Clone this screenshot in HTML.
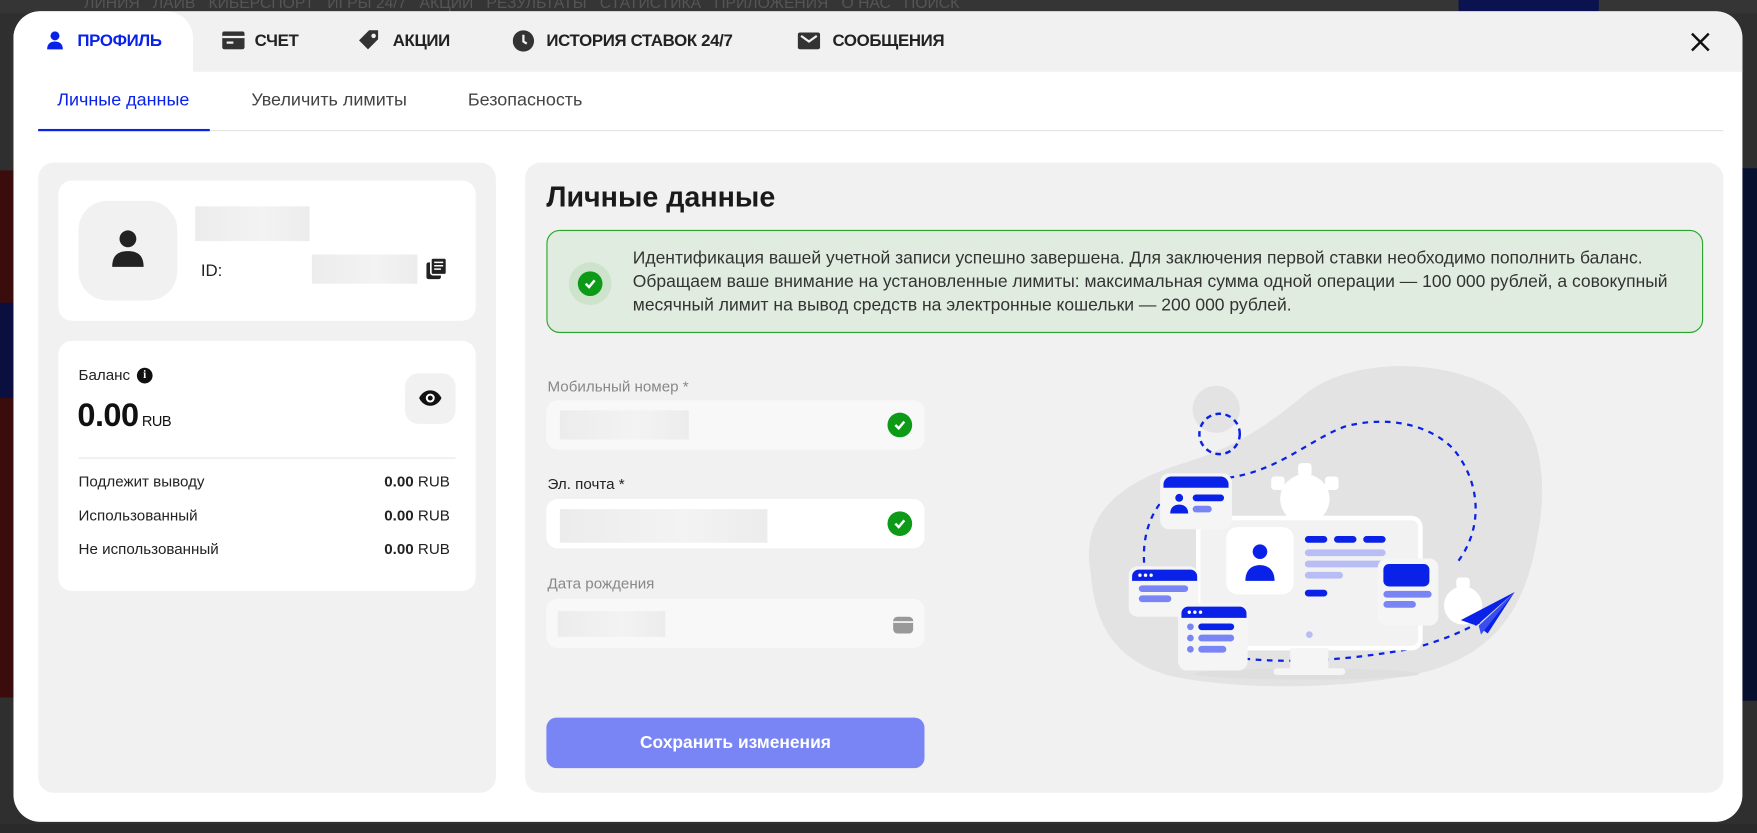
<!DOCTYPE html>
<html><head><meta charset="utf-8">
<style>
*{margin:0;padding:0;box-sizing:border-box}
html,body{width:1757px;height:832px;overflow:hidden;background:#2f2f2f;font-family:"Liberation Sans",sans-serif}
#s{position:absolute;left:0;top:0;width:1566px;height:742px;transform:scale(1.12197,1.1213);transform-origin:0 0}
.a{position:absolute}
.nav{color:#555;font-size:14px;top:-6px}
.modal{left:12px;top:10px;width:1541px;height:723px;background:#fff;border-radius:24px;overflow:hidden}
.tabbar{left:0;top:0;width:1541px;height:54px;background:#f1f1f1}
.tab{top:18px;font-size:15px;font-weight:bold;color:#222;letter-spacing:-0.3px;white-space:nowrap}
.sub{top:71px;font-size:16px;color:#444}
.panel{background:#f1f1f1;border-radius:14px}
.card{background:#fff;border-radius:12px}
.blur{background:linear-gradient(90deg,#ececec,#f3f3f3 60%,#ececec)}
.row{font-size:13.5px;color:#222}
.val{font-size:13.5px;color:#222;right:0}
.lbl{font-size:13.5px;color:#888}
.inp{width:337px;height:44px;border-radius:10px}
.chk{width:22px;height:22px;border-radius:50%;background:#0c9a17}
</style></head><body>
<div id="s">
<div class="a" style="left:0;top:0;width:1566px;height:12px;background:#353535"></div>
<div class="a nav" style="left:75px">ЛИНИЯ &nbsp; ЛАЙВ &nbsp; КИБЕРСПОРТ &nbsp; ИГРЫ 24/7 &nbsp; АКЦИИ &nbsp; РЕЗУЛЬТАТЫ &nbsp; СТАТИСТИКА &nbsp; ПРИЛОЖЕНИЯ &nbsp; О НАС &nbsp; ПОИСК</div>
<div class="a" style="left:1300px;top:0;width:125px;height:10px;background:#0a1250"></div>
<div class="a" style="left:0;top:152px;width:12px;height:470px;background:#3a0c0c"></div>
<div class="a" style="left:0;top:270px;width:12px;height:85px;background:#0a0f40"></div>
<div class="a" style="left:1553px;top:150px;width:13px;height:475px;background:#081030"></div>
<div class="a" style="left:0;top:735px;width:1566px;height:8px;background:#2a2a2a"></div>

<div class="a modal">
 <div class="a tabbar"></div>
 <div class="a" style="left:0;top:0;width:160px;height:54px;background:#fff;border-top-right-radius:24px"></div>
 <svg class="a" style="left:28px;top:17px" width="18" height="18" viewBox="0 0 18 18"><circle cx="9" cy="5" r="4" fill="#0a22e8"/><path d="M2 17c0-5 3-7 7-7s7 2 7 7z" fill="#0a22e8"/></svg>
 <div class="a tab" style="left:57px;color:#0a22e8">ПРОФИЛЬ</div>
 <svg class="a" style="left:186px;top:18px" width="20" height="16" viewBox="0 0 20 16"><rect x="0" y="0" width="20" height="16" rx="2" fill="#333"/><rect x="0" y="4" width="20" height="2" fill="#f1f1f1"/><rect x="4" y="9" width="6" height="2" fill="#f1f1f1"/></svg>
 <div class="a tab" style="left:215px">СЧЕТ</div>
 <svg class="a" style="left:307px;top:16px" width="20" height="20" viewBox="0 0 20 20"><path d="M10 1h8v8l-9 9-8-8z" fill="#333"/><circle cx="14" cy="6" r="2" fill="#f1f1f1"/></svg>
 <div class="a tab" style="left:338px">АКЦИИ</div>
 <svg class="a" style="left:445px;top:17px" width="19" height="19" viewBox="0 0 19 19"><circle cx="9.5" cy="9.5" r="9.5" fill="#333"/><path d="M9.5 4v6l3 2" stroke="#f1f1f1" stroke-width="2" fill="none"/></svg>
 <div class="a tab" style="left:475px">ИСТОРИЯ СТАВОК 24/7</div>
 <svg class="a" style="left:699px;top:19px" width="20" height="15" viewBox="0 0 20 15"><rect width="20" height="15" rx="2" fill="#333"/><path d="M3 3l7 5 7-5" stroke="#f1f1f1" stroke-width="2" fill="none"/></svg>
 <div class="a tab" style="left:730px">СООБЩЕНИЯ</div>
 <svg class="a" style="left:1495px;top:19px" width="17" height="17" viewBox="0 0 17 17"><path d="M1 1l15 15M16 1L1 16" stroke="#111" stroke-width="2.2"/></svg>

 <div class="a sub" style="left:39px;color:#0a22e8">Личные данные</div>
 <div class="a sub" style="left:212px">Увеличить лимиты</div>
 <div class="a sub" style="left:405px">Безопасность</div>
 <div class="a" style="left:22px;top:106px;width:1502px;height:1px;background:#e2e2e2"></div>
 <div class="a" style="left:22px;top:105px;width:153px;height:2px;background:#0a22e8"></div>

 <div class="a panel" style="left:22px;top:135px;width:408px;height:562px">
  <div class="a card" style="left:18px;top:16px;width:372px;height:125px">
   <div class="a" style="left:18px;top:18px;width:88px;height:89px;background:#f1f1f1;border-radius:26px"></div>
   <svg class="a" style="left:44px;top:43px" width="36" height="36" viewBox="0 0 36 36"><circle cx="18" cy="9" r="7.5" fill="#222"/><path d="M4 34c0-10 5-14 14-14s14 4 14 14z" fill="#222"/></svg>
   <div class="a blur" style="left:122px;top:23px;width:102px;height:31px"></div>
   <div class="a" style="left:127px;top:72px;font-size:15px;color:#222">ID:</div>
   <div class="a blur" style="left:226px;top:66px;width:94px;height:26px"></div>
   <svg class="a" style="left:328px;top:69px" width="18" height="19" viewBox="0 0 18 19"><rect x="0" y="4" width="13" height="15" rx="2" fill="#222"/><rect x="4" y="0" width="14" height="15" rx="2" fill="#222" stroke="#fff" stroke-width="1.5"/><path d="M7 4h8M7 7h8M7 10h6" stroke="#fff" stroke-width="1.3"/></svg>
  </div>
  <div class="a card" style="left:18px;top:159px;width:372px;height:223px">
   <div class="a" style="left:18px;top:23px;font-size:13.5px;color:#222">Баланс</div>
   <div class="a" style="left:70px;top:24px;width:14px;height:14px;border-radius:50%;background:#111;color:#fff;font-size:10px;font-weight:bold;text-align:center;line-height:14px;font-family:'Liberation Serif',serif">i</div>
   <div class="a" style="left:17px;top:51px;font-size:29px;font-weight:bold;color:#111;letter-spacing:-0.5px">0.00<span style="font-size:13px;font-weight:normal;margin-left:3px">RUB</span></div>
   <div class="a" style="left:309px;top:29px;width:45px;height:45px;background:#f1f1f1;border-radius:12px"></div>
   <svg class="a" style="left:321px;top:44px" width="21" height="14" viewBox="0 0 21 14"><path d="M0.5 7C3 2 7 0 10.5 0S18 2 20.5 7C18 12 14 14 10.5 14S3 12 0.5 7z" fill="#111"/><circle cx="10.5" cy="7" r="4" fill="#fff"/><circle cx="10.5" cy="7" r="2.2" fill="#111"/></svg>
   <div class="a" style="left:18px;top:104px;width:336px;height:1px;background:#e4e4e4"></div>
   <div class="a" style="left:18px;top:118px;width:331px">
    <div class="a row" style="left:0;top:0">Подлежит выводу</div><div class="a val" style="top:0"><b>0.00</b> RUB</div>
    <div class="a row" style="left:0;top:30px">Использованный</div><div class="a val" style="top:30px"><b>0.00</b> RUB</div>
    <div class="a row" style="left:0;top:60px">Не использованный</div><div class="a val" style="top:60px"><b>0.00</b> RUB</div>
   </div>
  </div>
 </div>

 <div class="a panel" style="left:456px;top:135px;width:1068px;height:562px">
  <div class="a" style="left:19px;top:17px;font-size:25.5px;font-weight:bold;color:#1a1a1a">Личные данные</div>
  <div class="a" style="left:19px;top:60px;width:1031px;height:92px;background:#e0ecdf;border:1px solid #2aa52a;border-radius:12px">
   <div class="a" style="left:19px;top:28px;width:38px;height:38px;border-radius:50%;background:#cde3cc"></div>
   <div class="a chk" style="left:27px;top:36px"></div>
   <svg class="a" style="left:32px;top:41px" width="12" height="12" viewBox="0 0 12 12"><path d="M2 6l3 3 5-6" stroke="#fff" stroke-width="2.2" fill="none"/></svg>
   <div class="a" style="left:76px;top:14px;width:950px;font-size:15.6px;line-height:21px;color:#333">Идентификация вашей учетной записи успешно завершена. Для заключения первой ставки необходимо пополнить баланс.<br>Обращаем ваше внимание на установленные лимиты: максимальная сумма одной операции — 100 000 рублей, а совокупный месячный лимит на вывод средств на электронные кошельки — 200 000 рублей.</div>
  </div>
  <div class="a lbl" style="left:20px;top:192px">Мобильный номер *</div>
  <div class="a inp" style="left:19px;top:212px;background:#f8f8f8">
   <div class="a blur" style="left:12px;top:9px;width:115px;height:26px"></div>
   <div class="a chk" style="left:304px;top:11px"></div>
   <svg class="a" style="left:309px;top:16px" width="12" height="12" viewBox="0 0 12 12"><path d="M2 6l3 3 5-6" stroke="#fff" stroke-width="2.2" fill="none"/></svg>
  </div>
  <div class="a lbl" style="left:20px;top:279px;color:#222">Эл. почта *</div>
  <div class="a inp" style="left:19px;top:300px;background:#fff">
   <div class="a blur" style="left:12px;top:9px;width:185px;height:30px"></div>
   <div class="a chk" style="left:304px;top:11px"></div>
   <svg class="a" style="left:309px;top:16px" width="12" height="12" viewBox="0 0 12 12"><path d="M2 6l3 3 5-6" stroke="#fff" stroke-width="2.2" fill="none"/></svg>
  </div>
  <div class="a lbl" style="left:20px;top:368px">Дата рождения</div>
  <div class="a inp" style="left:19px;top:389px;background:#f8f8f8">
   <div class="a blur" style="left:10px;top:11px;width:96px;height:23px"></div>
   <svg class="a" style="left:309px;top:14px" width="18" height="17" viewBox="0 0 18 17"><rect x="0" y="2" width="18" height="15" rx="4" fill="#999"/><rect x="0" y="6" width="18" height="1.5" fill="#f8f8f8"/></svg>
  </div>
  <div class="a" style="left:19px;top:495px;width:337px;height:45px;background:#7a85f5;border-radius:9px;color:#fff;font-size:15.5px;font-weight:bold;text-align:center;line-height:45px">Сохранить изменения</div>

  <svg class="a" style="left:480px;top:160px" width="460" height="320" viewBox="948 305 460 320">
   <path d="M972 510C962 455 1005 428 1055 413C1105 398 1135 375 1165 350C1205 320 1285 318 1335 348C1380 380 1378 440 1370 480C1360 540 1335 580 1275 598C1205 616 1100 616 1040 602C995 588 976 560 972 510z" fill="#e3e3e3"/>
   <circle cx="1084" cy="365" r="21" fill="#e3e3e3"/>
   <circle cx="1087" cy="387" r="18" fill="none" stroke="#0a22e8" stroke-width="2.2" stroke-dasharray="5 4"/>
   <path d="M1095 426C1140 420 1170 390 1200 380C1240 370 1275 380 1295 400C1320 430 1322 470 1300 500" fill="none" stroke="#0a22e8" stroke-width="2" stroke-dasharray="5 5"/>
   <path d="M1040 442C1022 460 1018 485 1020 505" fill="none" stroke="#0a22e8" stroke-width="2" stroke-dasharray="5 5"/>
   <path d="M1070 580C1120 595 1200 590 1260 578C1290 570 1310 560 1322 553" fill="none" stroke="#0a22e8" stroke-width="2" stroke-dasharray="5 5"/>
   <ellipse cx="1165" cy="601" rx="100" ry="5" fill="#dedede"/>
   <g fill="#fff"><circle cx="1163" cy="445" r="22"/><rect x="1157" y="413" width="12" height="12" rx="3"/><rect x="1133" y="425" width="12" height="12" rx="3"/><rect x="1181" y="425" width="12" height="12" rx="3"/></g>
   <circle cx="1304" cy="540" r="17" fill="#fff"/><rect x="1298" y="515" width="12" height="10" rx="3" fill="#fff"/>
   <rect x="1068" y="462" width="198" height="116" rx="8" fill="#f2f2f2" stroke="#fff" stroke-width="4"/>
   <rect x="1150" y="578" width="34" height="20" fill="#f5f5f5"/>
   <rect x="1135" y="596" width="64" height="6" rx="3" fill="#f5f5f5"/>
   <circle cx="1167" cy="566" r="3" fill="#b8bef5"/>
   <rect x="1093" y="470" width="60" height="60" rx="10" fill="#fff"/>
   <circle cx="1123" cy="492" r="6.5" fill="#0a22e8"/><path d="M1110 518c0-10 6-14 13-14s13 4 13 14z" fill="#0a22e8"/>
   <g fill="#0a22e8"><rect x="1163" y="478" width="20" height="6" rx="3"/><rect x="1189" y="478" width="20" height="6" rx="3"/><rect x="1215" y="478" width="20" height="6" rx="3"/><rect x="1163" y="526" width="20" height="6" rx="3"/></g>
   <g fill="#b8bef5"><rect x="1163" y="490" width="72" height="6" rx="3"/><rect x="1163" y="500" width="72" height="6" rx="3"/><rect x="1163" y="510" width="34" height="6" rx="3"/></g>
   <rect x="1034" y="422" width="64" height="50" rx="8" fill="#f5f5f5"/>
   <path d="M1037 432a7 7 0 0 1 7-7h44a7 7 0 0 1 7 7v3h-58z" fill="#0a22e8"/>
   <circle cx="1051" cy="444" r="3.5" fill="#0a22e8"/><path d="M1043 458c0-6 4-8 8-8s8 2 8 8z" fill="#0a22e8"/>
   <rect x="1063" y="441" width="28" height="6" rx="3" fill="#0a22e8"/><rect x="1063" y="451" width="17" height="6" rx="3" fill="#7a85f5"/>
   <rect x="1006" y="505" width="62" height="45" rx="8" fill="#f5f5f5"/>
   <path d="M1009 514a6 6 0 0 1 6-6h46a6 6 0 0 1 6 6v4h-58z" fill="#0a22e8"/>
   <g fill="#fff"><circle cx="1016" cy="513" r="1.5"/><circle cx="1021" cy="513" r="1.5"/><circle cx="1026" cy="513" r="1.5"/></g>
   <rect x="1015" y="522" width="44" height="6" rx="3" fill="#7a85f5"/><rect x="1015" y="531" width="29" height="6" rx="3" fill="#7a85f5"/>
   <rect x="1050" y="538" width="62" height="60" rx="8" fill="#f5f5f5"/>
   <path d="M1053 547a6 6 0 0 1 6-6h46a6 6 0 0 1 6 6v4h-58z" fill="#0a22e8"/>
   <g fill="#fff"><circle cx="1060" cy="546" r="1.5"/><circle cx="1065" cy="546" r="1.5"/><circle cx="1070" cy="546" r="1.5"/></g>
   <g fill="#7a85f5"><rect x="1058" y="556" width="6" height="6" rx="3"/><rect x="1068" y="556" width="32" height="6" rx="3" fill="#0a22e8"/><rect x="1058" y="566" width="6" height="6" rx="3"/><rect x="1068" y="566" width="32" height="6" rx="3"/><rect x="1058" y="576" width="6" height="6" rx="3"/><rect x="1068" y="576" width="25" height="6" rx="3"/></g>
   <rect x="1228" y="498" width="54" height="60" rx="8" fill="#f5f5f5"/>
   <rect x="1233" y="503" width="41" height="20" rx="5" fill="#0a22e8"/>
   <rect x="1233" y="527" width="43" height="6" rx="3" fill="#7a85f5"/><rect x="1233" y="536" width="29" height="6" rx="3" fill="#7a85f5"/>
   <path d="M1350 528L1302 553l14 5z" fill="#0a22e8"/><path d="M1350 528l-24 37-8-6z" fill="#0a22e8"/><path d="M1350 528l-32 30 2 8z" fill="#3a4ef0"/>
  </svg>
 </div>
</div>
</div>
</body></html>
